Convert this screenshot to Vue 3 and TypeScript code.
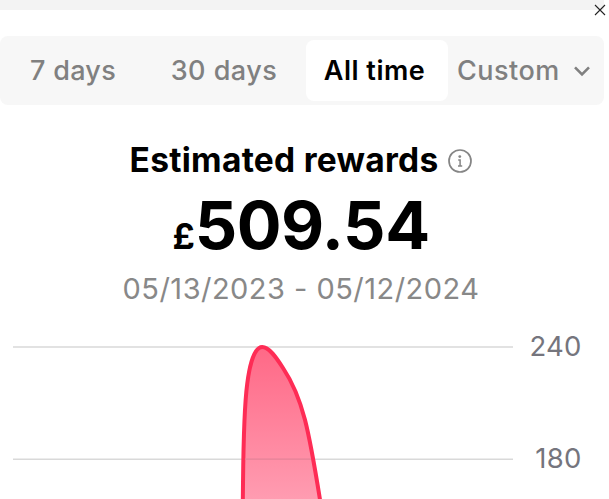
<script setup lang="ts">
interface Tab {
  label: string
  key: string
  menu?: boolean
}

const tabs: Tab[] = [
  { label: '7 days', key: 'week' },
  { label: '30 days', key: 'month' },
  { label: 'All time', key: 'all' },
  { label: 'Custom', key: 'custom', menu: true },
]
const selected = 'all'
const ticks: number[] = [240, 180]
</script>

<template>
  <main class="screen">
    <div class="strip"></div>
    <button class="close" aria-label="Close">
      <svg width="12" height="12" viewBox="0 0 12 12">
        <path d="M1 1L11 11M11 1L1 11" fill="none" stroke="#222" stroke-width="1.1" />
      </svg>
    </button>

    <nav class="tabs">
      <button v-for="tab in tabs" :key="tab.key" class="tab" :class="[tab.key, { active: tab.key === selected }]">
        <span>{{ tab.label }}</span>
        <svg v-if="tab.menu" class="chevron" width="18" height="12" viewBox="0 0 18 12">
          <path d="M2 2.3L9 9.3L16 2.3" fill="none" stroke="#808080" stroke-width="2.6" />
        </svg>
      </button>
    </nav>

    <section class="summary">
      <h1 class="title">
        <span>Estimated rewards</span>
        <svg width="24" height="24" viewBox="0 0 24 24">
          <circle cx="12" cy="12" r="11" fill="none" stroke="#858585" stroke-width="1.7" />
          <circle cx="11.8" cy="7.6" r="1.4" fill="#858585" />
          <path d="M10.2 11H12.1V16.8M10 17H14.2" fill="none" stroke="#858585" stroke-width="1.5" />
        </svg>
      </h1>
      <div class="amount"><span class="currency">£</span><span class="value">509.54</span></div>
      <div class="range">05/13/2023 - 05/12/2024</div>
    </section>

    <section class="chart">
      <svg class="plot" width="515" height="173" viewBox="0 0 515 173">
        <defs>
          <linearGradient id="area" x1="0" y1="20" x2="0" y2="173" gradientUnits="userSpaceOnUse">
            <stop offset="0" stop-color="#ff6886" />
            <stop offset="1" stop-color="#ff9cb1" />
          </linearGradient>
        </defs>
        <path d="M13 21H513M13 133.2H513" stroke="#d9d9d9" stroke-width="1.6" />
        <path
          d="M242.8 176C243.4 129 243.2 88 247.2 58C250.2 34 255.5 21 262.2 21C269 21 276 31 283 42C303 72 309 105 320.4 176"
          fill="url(#area)" stroke="#fe2c55" stroke-width="4"
        />
        <path d="M245 133.2H311" stroke="#e48297" stroke-width="1.3" />
      </svg>
      <div class="axis">
        <span v-for="tick in ticks" :key="tick">{{ tick }}</span>
      </div>
    </section>
  </main>
</template>

<style>
body {
  margin: 0;
  background: #fff;
  overflow: hidden;
}
</style>

<style scoped>
.screen {
  position: relative;
  width: 609px;
  height: 499px;
  overflow: hidden;
  background: #fff;
  font-family: Inter, "Liberation Sans", sans-serif;
}
button {
  border: 0;
  padding: 0;
  background: none;
  font: inherit;
  color: inherit;
}
.strip {
  width: 604px;
  height: 10px;
  background: #f3f3f3;
}
.close {
  position: absolute;
  top: 4px;
  right: 3px;
  display: flex;
}
.tabs {
  box-sizing: border-box;
  width: 604px;
  height: 69px;
  margin-top: 26px;
  padding: 4px 0;
  display: grid;
  grid-template-columns: 146px 160px 142px 156px;
  background: #f7f7f7;
  border-radius: 8px;
}
.tab {
  display: flex;
  align-items: center;
  justify-content: center;
  white-space: nowrap;
  border-radius: 8px;
  font-size: 27px;
  font-weight: 500;
  letter-spacing: 0.5px;
  color: #808080;
}
.tab.week {
  letter-spacing: 0.3px;
}
.tab.month {
  padding-right: 4px;
}
.tab.active {
  padding-right: 5px;
  background: #fff;
  color: #000;
  font-weight: 600;
}
.tab.custom {
  justify-content: flex-start;
  padding-left: 9px;
}
.chevron {
  margin-left: 13px;
}
.summary {
  display: flex;
  flex-direction: column;
  align-items: center;
  width: 602px;
  white-space: nowrap;
}
.title {
  display: flex;
  align-items: center;
  gap: 10px;
  height: 40px;
  margin: 35px 0 0;
  font-size: 33.5px;
  font-weight: 700;
  letter-spacing: 0.27px;
}
.title svg {
  position: relative;
  top: 1px;
}
.amount {
  display: flex;
  align-items: baseline;
  height: 70px;
  margin-top: 10px;
  line-height: 70px;
}
.currency {
  font-size: 35px;
  font-weight: 700;
}
.value {
  font-size: 66.5px;
  font-weight: 700;
  letter-spacing: -0.5px;
}
.range {
  height: 40px;
  margin-top: 9px;
  line-height: 40px;
  font-size: 29px;
  letter-spacing: 0.47px;
  color: #888;
}
.chart {
  display: flex;
  height: 173px;
  margin-top: 17px;
}
.plot {
  flex: none;
}
.axis {
  display: flex;
  flex-direction: column;
  gap: 72px;
  width: 66.5px;
  text-align: right;
  font-size: 27.5px;
  line-height: 40px;
  letter-spacing: 0.2px;
  color: #75757d;
}
</style>
